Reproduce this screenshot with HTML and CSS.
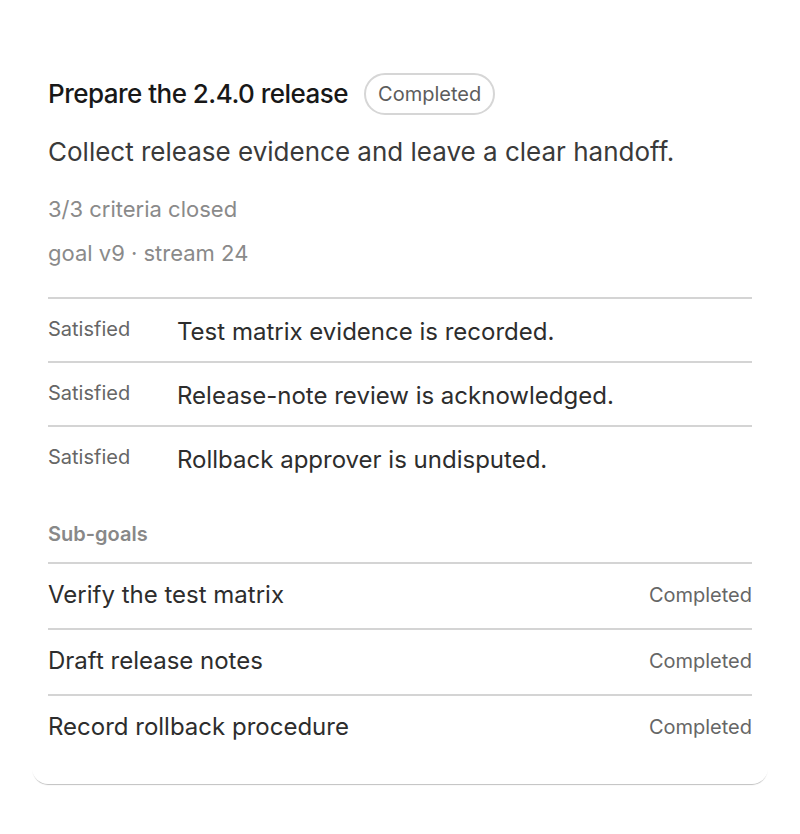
FILE: index.html
```html
<!DOCTYPE html>
<html lang="en">
<head>
    <meta charset="UTF-8">
    <title>Prepare the 2.4.0 release</title>
    <link rel="stylesheet" href="styles.css">
</head>
<body>
<div class="page">
    <div class="card">
        <div class="head">
            <h1 class="title">Prepare the 2.4.0 release</h1>
            <span class="badge">Completed</span>
        </div>
        <p class="desc">Collect release evidence and leave a clear handoff.</p>
        <p class="meta">3/3 criteria closed</p>
        <p class="meta meta-second">goal v9 · stream 24</p>

        <ul class="criteria">
            <li>
                <span class="state">Satisfied</span>
                <span class="text">Test matrix evidence is recorded.</span>
            </li>
            <li>
                <span class="state">Satisfied</span>
                <span class="text">Release-note review is acknowledged.</span>
            </li>
            <li>
                <span class="state">Satisfied</span>
                <span class="text">Rollback approver is undisputed.</span>
            </li>
        </ul>

        <h2 class="sub-title">Sub-goals</h2>
        <ul class="subgoals">
            <li>
                <span class="name">Verify the test matrix</span>
                <span class="status">Completed</span>
            </li>
            <li>
                <span class="name">Draft release notes</span>
                <span class="status">Completed</span>
            </li>
            <li>
                <span class="name">Record rollback procedure</span>
                <span class="status">Completed</span>
            </li>
        </ul>
    </div>
</div>
</body>
</html>
```

FILE: styles.css
```css
* {
    margin: 0;
    padding: 0;
    box-sizing: border-box;
}

ul {
    list-style: none;
}

body {
    background-color: #fff;
    font-family: Inter, "Noto Sans", "Liberation Sans", sans-serif;
}

.page {
    padding: 0 32px 48px;
}

.card {
    background-color: #fff;
    border-radius: 0 0 16px 16px;
    box-shadow: 0 2px 1px -1px rgba(0, 0, 0, 0.25);
    padding: 73px 16px 24px;
}

.head {
    display: flex;
    align-items: center;
    gap: 16px;
}

.title {
    font-size: 26px;
    line-height: 32px;
    font-weight: 500;
    letter-spacing: -0.02em;
    color: #181818;
}

.badge {
    display: inline-block;
    height: 42px;
    line-height: 38px;
    padding: 0 12px;
    border: 2px solid #d6d6d6;
    border-radius: 21px;
    font-size: 20px;
    color: #5c5c5c;
}

.desc {
    margin-top: 21px;
    font-size: 26px;
    line-height: 32px;
    color: #3a3a3a;
}

.meta {
    margin-top: 27px;
    font-size: 22px;
    line-height: 28px;
    color: #8a8a8a;
}

.meta-second {
    margin-top: 16px;
}

.criteria {
    margin-top: 30px;
}

.criteria li {
    display: grid;
    grid-template-columns: 129px 1fr;
    align-items: start;
    border-top: 2px solid #d4d4d4;
    padding: 18px 0 14px;
}

.state {
    font-size: 20px;
    line-height: 24px;
    color: #666;
}

.text {
    font-size: 24px;
    line-height: 30px;
    color: #2d2d2d;
}

.sub-title {
    margin-top: 33px;
    font-size: 20px;
    line-height: 24px;
    font-weight: 600;
    color: #888;
}

.subgoals {
    margin-top: 16px;
}

.subgoals li {
    display: flex;
    justify-content: space-between;
    align-items: center;
    border-top: 2px solid #d4d4d4;
    padding: 16px 0 18px;
}

.name {
    font-size: 24px;
    line-height: 30px;
    color: #2d2d2d;
}

.status {
    font-size: 20px;
    line-height: 24px;
    color: #666;
}
```
